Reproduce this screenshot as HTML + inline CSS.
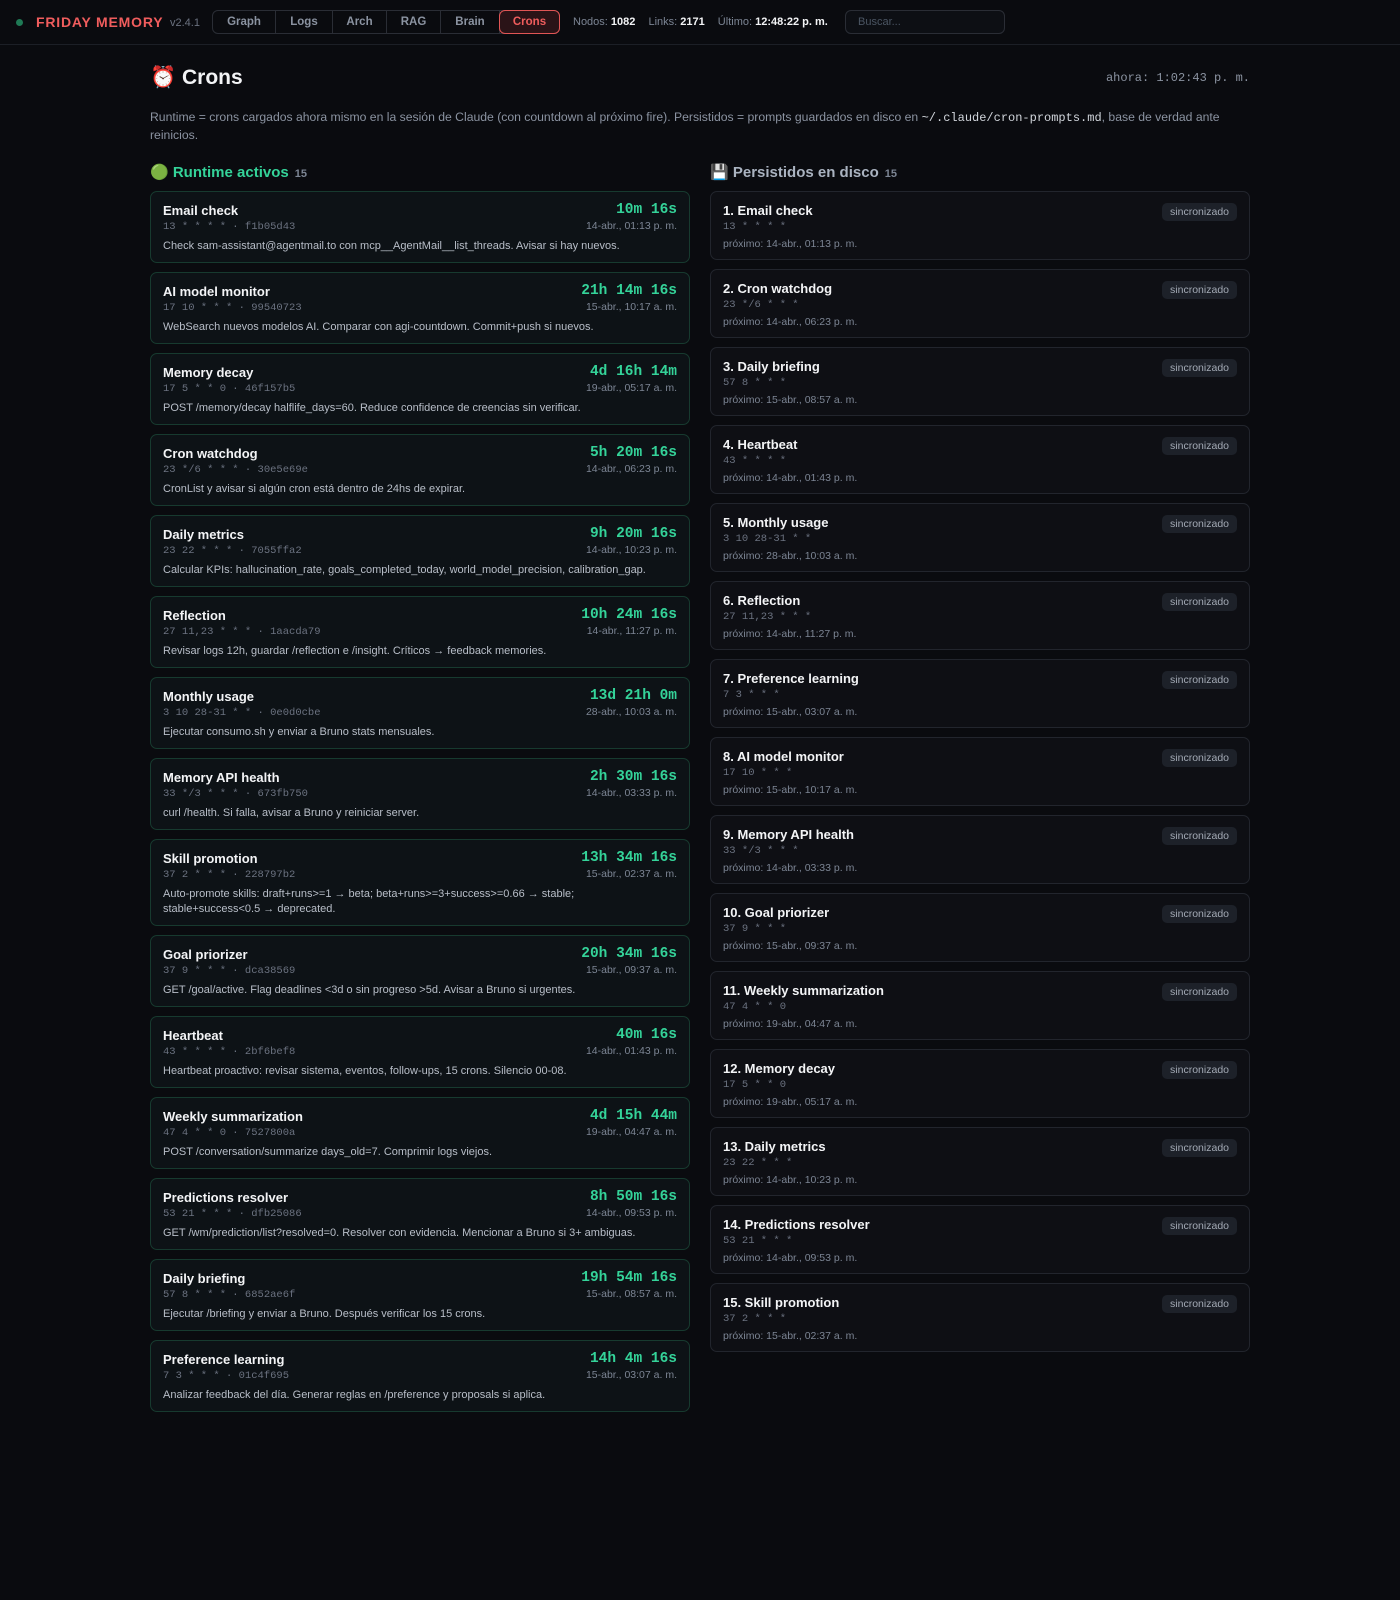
<!DOCTYPE html>
<html><head><meta charset="utf-8"><style>
*{box-sizing:border-box;margin:0;padding:0}
body{width:1400px;height:1600px;background:#0a0b0f;color:#e5e7eb;font-family:"Liberation Sans","DejaVu Sans",sans-serif;overflow:hidden}
.hdr{height:45px;border-bottom:1px solid #1c1f26;position:relative}
.dot{position:absolute;left:16px;top:19px;width:7px;height:7px;border-radius:50%;background:#1f7a55}
.brand{position:absolute;left:36px;top:14px;font-size:14px;font-weight:bold;color:#f05d5d;letter-spacing:.8px}
.ver{position:absolute;left:170px;top:17px;font-size:11px;color:#6b7280}
.tabs{position:absolute;left:212px;top:10px;height:24px;display:flex;border:1px solid #2a2d35;border-radius:6px}
.tabs div{font-size:11.5px;font-weight:bold;color:#8b93a1;display:flex;align-items:center;justify-content:center;border-right:1px solid #2a2d35}
.tabs div.on{color:#f05d5d;background:#2a1317;border:1px solid #e05555;border-radius:6px;margin:-1px}
.stats{position:absolute;left:573px;top:16px;font-size:11px;color:#7c8594;white-space:nowrap}
.stats b{color:#f3f4f6;margin-right:10px}
.search{position:absolute;left:845px;top:10px;width:160px;height:24px;border:1px solid #2a2d35;border-radius:6px;font-size:11px;color:#4b5563;padding:5px 12px;background:#0d0f14}
.wrap{position:absolute;left:150px;top:45px;width:1100px}
h1{position:absolute;top:21px;left:0;font-size:21px;font-weight:bold;color:#f3f4f6}
.now{position:absolute;right:0;top:26px;font-family:"Liberation Mono",monospace;font-size:12px;color:#8b93a1}
.intro{position:absolute;top:64px;left:0;width:1100px;font-size:12.2px;line-height:17px;color:#8b93a1}
.intro code{font-family:"Liberation Mono",monospace;color:#d1d5db;font-size:12px}
.col{position:absolute;top:118px;width:540px}
.sec{font-size:15px;font-weight:bold;height:28px}
.sec span{font-size:11px;color:#7c8594;margin-left:6px}
.card{border:1px solid #173a2f;background:#0d1216;border-radius:7px;padding:11px 12px 0 12px;margin-bottom:9px;position:relative;height:72px}
.card .t{font-size:13px;font-weight:bold;color:#f3f4f6}
.card .c{font-family:"Liberation Mono",monospace;font-size:10.5px;color:#6b7280;margin-top:3px}
.card .d{font-size:11px;color:#b8bec8;margin-top:6px;line-height:15px}
.card .cd{position:absolute;right:12px;top:10px;font-family:"Liberation Mono",monospace;font-weight:bold;font-size:14.5px;color:#34d399}
.card .dt{position:absolute;right:12px;top:28px;font-size:10.5px;color:#7c8594}
.pc{border:1px solid #22252d;background:#0e0f14;border-radius:7px;padding:11px 12px 0 12px;margin-bottom:9px;position:relative;height:69px}
.pc .t{font-size:13px;font-weight:bold;color:#f3f4f6}
.pc .c{font-family:"Liberation Mono",monospace;font-size:10.5px;color:#6b7280;margin-top:3px}
.pc .n{font-size:10.5px;color:#7c8594;margin-top:5px}
.pc .b{position:absolute;right:12px;top:11px;background:#1d2129;border-radius:5px;font-size:10.5px;color:#a3aab5;padding:3px 8px}
</style></head><body>
<div class="hdr"><div class="dot"></div><div class="brand">FRIDAY MEMORY</div><div class="ver">v2.4.1</div>
<div class="tabs"><div style="width:63px">Graph</div><div style="width:57px">Logs</div><div style="width:54px">Arch</div><div style="width:54px">RAG</div><div style="width:59px">Brain</div><div class="on" style="width:61px">Crons</div></div>
<div class="stats">Nodos: <b>1082</b> Links: <b>2171</b> Último: <b>12:48:22 p. m.</b></div>
<div class="search">Buscar...</div></div>
<div class="wrap">
<h1>⏰ Crons</h1><div class="now">ahora: 1:02:43 p. m.</div>
<div class="intro">Runtime = crons cargados ahora mismo en la sesión de Claude (con countdown al próximo fire). Persistidos = prompts guardados en disco en <code>~/.claude/cron-prompts.md</code>, base de verdad ante reinicios.</div>
<div class="col" style="left:0">
<div class="sec" style="color:#34d399">🟢 Runtime activos<span>15</span></div>
<div class="card"><div class="t">Email check</div><div class="c">13 * * * * · f1b05d43</div><div class="d">Check sam-assistant@agentmail.to con mcp__AgentMail__list_threads. Avisar si hay nuevos.</div><div class="cd">10m 16s</div><div class="dt">14-abr., 01:13 p. m.</div></div>
<div class="card"><div class="t">AI model monitor</div><div class="c">17 10 * * * · 99540723</div><div class="d">WebSearch nuevos modelos AI. Comparar con agi-countdown. Commit+push si nuevos.</div><div class="cd">21h 14m 16s</div><div class="dt">15-abr., 10:17 a. m.</div></div>
<div class="card"><div class="t">Memory decay</div><div class="c">17 5 * * 0 · 46f157b5</div><div class="d">POST /memory/decay halflife_days=60. Reduce confidence de creencias sin verificar.</div><div class="cd">4d 16h 14m</div><div class="dt">19-abr., 05:17 a. m.</div></div>
<div class="card"><div class="t">Cron watchdog</div><div class="c">23 */6 * * * · 30e5e69e</div><div class="d">CronList y avisar si algún cron está dentro de 24hs de expirar.</div><div class="cd">5h 20m 16s</div><div class="dt">14-abr., 06:23 p. m.</div></div>
<div class="card"><div class="t">Daily metrics</div><div class="c">23 22 * * * · 7055ffa2</div><div class="d">Calcular KPIs: hallucination_rate, goals_completed_today, world_model_precision, calibration_gap.</div><div class="cd">9h 20m 16s</div><div class="dt">14-abr., 10:23 p. m.</div></div>
<div class="card"><div class="t">Reflection</div><div class="c">27 11,23 * * * · 1aacda79</div><div class="d">Revisar logs 12h, guardar /reflection e /insight. Críticos → feedback memories.</div><div class="cd">10h 24m 16s</div><div class="dt">14-abr., 11:27 p. m.</div></div>
<div class="card"><div class="t">Monthly usage</div><div class="c">3 10 28-31 * * · 0e0d0cbe</div><div class="d">Ejecutar consumo.sh y enviar a Bruno stats mensuales.</div><div class="cd">13d 21h 0m</div><div class="dt">28-abr., 10:03 a. m.</div></div>
<div class="card"><div class="t">Memory API health</div><div class="c">33 */3 * * * · 673fb750</div><div class="d">curl /health. Si falla, avisar a Bruno y reiniciar server.</div><div class="cd">2h 30m 16s</div><div class="dt">14-abr., 03:33 p. m.</div></div>
<div class="card" style="height:87px"><div class="t">Skill promotion</div><div class="c">37 2 * * * · 228797b2</div><div class="d">Auto-promote skills: draft+runs&gt;=1 → beta; beta+runs&gt;=3+success&gt;=0.66 → stable;<br>stable+success&lt;0.5 → deprecated.</div><div class="cd">13h 34m 16s</div><div class="dt">15-abr., 02:37 a. m.</div></div>
<div class="card"><div class="t">Goal priorizer</div><div class="c">37 9 * * * · dca38569</div><div class="d">GET /goal/active. Flag deadlines &lt;3d o sin progreso &gt;5d. Avisar a Bruno si urgentes.</div><div class="cd">20h 34m 16s</div><div class="dt">15-abr., 09:37 a. m.</div></div>
<div class="card"><div class="t">Heartbeat</div><div class="c">43 * * * * · 2bf6bef8</div><div class="d">Heartbeat proactivo: revisar sistema, eventos, follow-ups, 15 crons. Silencio 00-08.</div><div class="cd">40m 16s</div><div class="dt">14-abr., 01:43 p. m.</div></div>
<div class="card"><div class="t">Weekly summarization</div><div class="c">47 4 * * 0 · 7527800a</div><div class="d">POST /conversation/summarize days_old=7. Comprimir logs viejos.</div><div class="cd">4d 15h 44m</div><div class="dt">19-abr., 04:47 a. m.</div></div>
<div class="card"><div class="t">Predictions resolver</div><div class="c">53 21 * * * · dfb25086</div><div class="d">GET /wm/prediction/list?resolved=0. Resolver con evidencia. Mencionar a Bruno si 3+ ambiguas.</div><div class="cd">8h 50m 16s</div><div class="dt">14-abr., 09:53 p. m.</div></div>
<div class="card"><div class="t">Daily briefing</div><div class="c">57 8 * * * · 6852ae6f</div><div class="d">Ejecutar /briefing y enviar a Bruno. Después verificar los 15 crons.</div><div class="cd">19h 54m 16s</div><div class="dt">15-abr., 08:57 a. m.</div></div>
<div class="card"><div class="t">Preference learning</div><div class="c">7 3 * * * · 01c4f695</div><div class="d">Analizar feedback del día. Generar reglas en /preference y proposals si aplica.</div><div class="cd">14h 4m 16s</div><div class="dt">15-abr., 03:07 a. m.</div></div>
</div>
<div class="col" style="left:560px">
<div class="sec" style="color:#aab3c0">💾 Persistidos en disco<span>15</span></div>
<div class="pc"><div class="t">1. Email check</div><div class="c">13 * * * *</div><div class="n">próximo: 14-abr., 01:13 p. m.</div><div class="b">sincronizado</div></div>
<div class="pc"><div class="t">2. Cron watchdog</div><div class="c">23 */6 * * *</div><div class="n">próximo: 14-abr., 06:23 p. m.</div><div class="b">sincronizado</div></div>
<div class="pc"><div class="t">3. Daily briefing</div><div class="c">57 8 * * *</div><div class="n">próximo: 15-abr., 08:57 a. m.</div><div class="b">sincronizado</div></div>
<div class="pc"><div class="t">4. Heartbeat</div><div class="c">43 * * * *</div><div class="n">próximo: 14-abr., 01:43 p. m.</div><div class="b">sincronizado</div></div>
<div class="pc"><div class="t">5. Monthly usage</div><div class="c">3 10 28-31 * *</div><div class="n">próximo: 28-abr., 10:03 a. m.</div><div class="b">sincronizado</div></div>
<div class="pc"><div class="t">6. Reflection</div><div class="c">27 11,23 * * *</div><div class="n">próximo: 14-abr., 11:27 p. m.</div><div class="b">sincronizado</div></div>
<div class="pc"><div class="t">7. Preference learning</div><div class="c">7 3 * * *</div><div class="n">próximo: 15-abr., 03:07 a. m.</div><div class="b">sincronizado</div></div>
<div class="pc"><div class="t">8. AI model monitor</div><div class="c">17 10 * * *</div><div class="n">próximo: 15-abr., 10:17 a. m.</div><div class="b">sincronizado</div></div>
<div class="pc"><div class="t">9. Memory API health</div><div class="c">33 */3 * * *</div><div class="n">próximo: 14-abr., 03:33 p. m.</div><div class="b">sincronizado</div></div>
<div class="pc"><div class="t">10. Goal priorizer</div><div class="c">37 9 * * *</div><div class="n">próximo: 15-abr., 09:37 a. m.</div><div class="b">sincronizado</div></div>
<div class="pc"><div class="t">11. Weekly summarization</div><div class="c">47 4 * * 0</div><div class="n">próximo: 19-abr., 04:47 a. m.</div><div class="b">sincronizado</div></div>
<div class="pc"><div class="t">12. Memory decay</div><div class="c">17 5 * * 0</div><div class="n">próximo: 19-abr., 05:17 a. m.</div><div class="b">sincronizado</div></div>
<div class="pc"><div class="t">13. Daily metrics</div><div class="c">23 22 * * *</div><div class="n">próximo: 14-abr., 10:23 p. m.</div><div class="b">sincronizado</div></div>
<div class="pc"><div class="t">14. Predictions resolver</div><div class="c">53 21 * * *</div><div class="n">próximo: 14-abr., 09:53 p. m.</div><div class="b">sincronizado</div></div>
<div class="pc"><div class="t">15. Skill promotion</div><div class="c">37 2 * * *</div><div class="n">próximo: 15-abr., 02:37 a. m.</div><div class="b">sincronizado</div></div>
</div>
</div>
</body></html>
